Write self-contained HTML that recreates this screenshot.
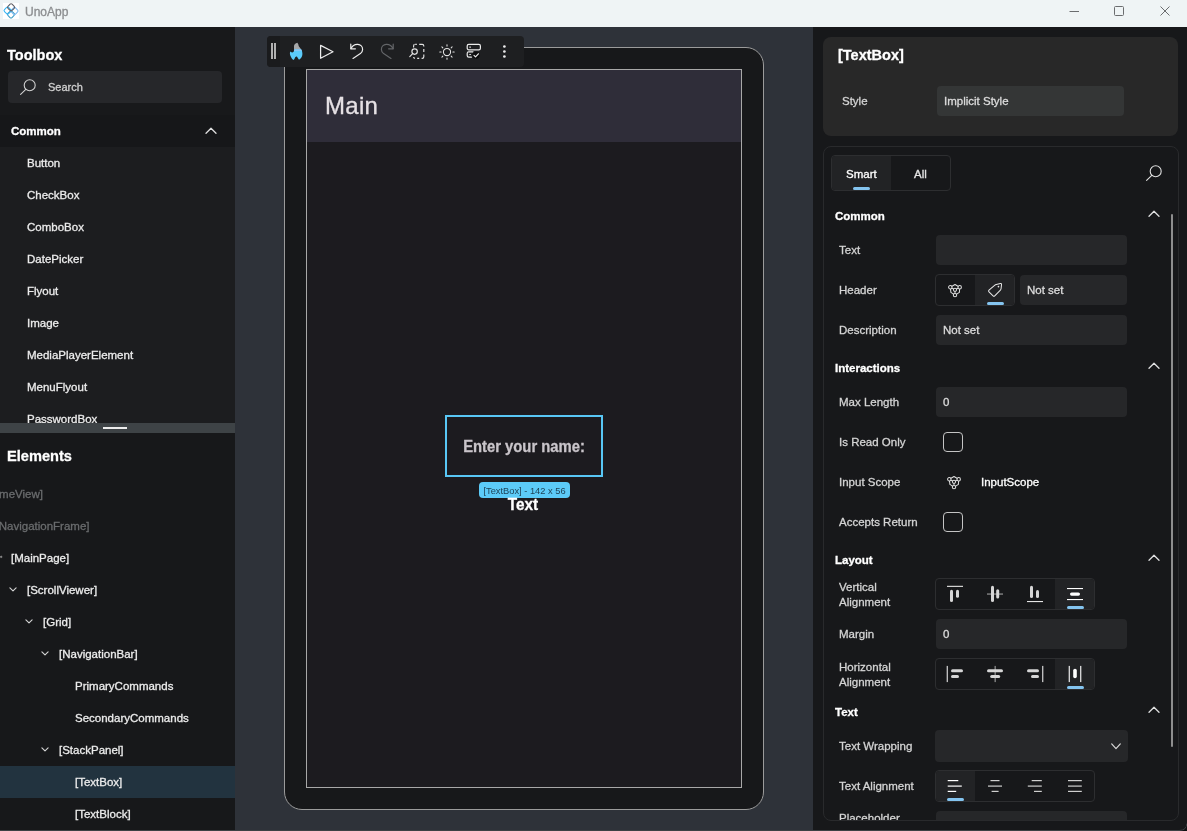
<!DOCTYPE html>
<html lang="en">
<head>
<meta charset="utf-8">
<title>UnoApp</title>
<style>
*{box-sizing:border-box;margin:0;padding:0}
html,body{width:1187px;height:831px;overflow:hidden;background:#17181a}
body{font-family:"Liberation Sans",sans-serif;font-size:12px;color:#ececec;position:relative}
.abs{position:absolute}
#titlebar,#left,#center,#right{will-change:transform}
.t{position:absolute;white-space:nowrap;line-height:16px;height:16px;-webkit-text-stroke:0.3px currentColor}
.b{font-weight:bold}
svg{position:absolute;overflow:visible}
/* title bar */
#titlebar{left:0;top:0;width:1187px;height:27px;background:#eff4f5}
/* left */
#left{left:0;top:27px;width:235px;height:804px;background:#17181a;overflow:hidden}
#center{left:235px;top:27px;width:578px;height:804px;background:#2e3239;overflow:hidden}
#right{left:813px;top:27px;width:374px;height:804px;background:#17181a;overflow:hidden}
.inp{position:absolute;background:#262729;border-radius:4px}
.grp{position:absolute;border:1px solid #2d2e30;border-radius:4px;background:#17181a}
.sel{position:absolute;background:#222325;border-radius:3px}
.ul{position:absolute;height:3px;border-radius:2px;background:#84c4ef}
.lbl{color:#d4d4d4}
</style>
</head>
<body>
<!-- TITLE BAR -->
<div id="titlebar" class="abs">
  <div class="abs" style="left:3px;top:3px;width:16px;height:16px;background:#fff"></div>
  <svg style="left:3px;top:3px" width="16" height="16" viewBox="0 0 16 16" fill="none" stroke-width="1.05">
    <rect x="-2.9" y="-2.9" width="5.8" height="5.8" rx="1.4" transform="translate(8 11.4) rotate(45)" stroke="#3d9cc4"/>
    <rect x="-2.9" y="-2.9" width="5.8" height="5.8" rx="1.4" transform="translate(11.5 8) rotate(45)" stroke="#7cb9f0"/>
    <rect x="-2.9" y="-2.9" width="5.8" height="5.8" rx="1.4" transform="translate(4.6 7.6) rotate(45)" stroke="#35b5f5"/>
    <rect x="-2.9" y="-2.9" width="5.8" height="5.8" rx="1.4" transform="translate(8.1 4.3) rotate(45)" stroke="#5d5d64"/>
  </svg>
  <div class="t" style="left:25px;top:4px;font-size:12px;color:#8b8d8f">UnoApp</div>
  <svg style="left:1069px;top:5px" width="110" height="14" viewBox="0 0 110 14" fill="none" stroke="#6b6d6f" stroke-width="1">
    <path d="M0.5 6.5H10"/>
    <rect x="45.5" y="1.5" width="9" height="9" rx="1"/>
    <path d="M91.5 1.5L100.5 10.5M100.5 1.5L91.5 10.5"/>
  </svg>
</div>

<!-- LEFT PANEL -->
<div id="left" class="abs">
  <div class="abs" style="left:0;top:0;width:235px;height:88px;background:#18191b"></div>
  <div class="abs" style="left:0;top:88px;width:235px;height:32px;background:#161719"></div>
  <div class="abs" style="left:0;top:120px;width:235px;height:276px;background:#1c1d1f"></div>
  <div class="t b" style="left:7px;top:18px;font-size:14.5px;line-height:20px;height:20px;color:#fff">Toolbox</div>
  <div class="inp" style="left:8px;top:44px;width:214px;height:32px;background:#26272a"></div>
  <svg style="left:20px;top:52px" width="16" height="16" viewBox="0 0 16 16" fill="none" stroke="#d0d0d0" stroke-width="1.1" stroke-linecap="round"><circle cx="9.7" cy="6.3" r="5.5"/><path d="M5.8 10.4L0.6 15.4"/></svg>
  <div class="t" style="left:48px;top:52px;font-size:11px;color:#cfcfcf">Search</div>
  <div class="t b" style="left:11px;top:96px;font-size:11.5px;color:#fff">Common</div>
  <svg style="left:205px;top:100px" width="12" height="8" viewBox="0 0 12 8" fill="none" stroke="#e0e0e0" stroke-width="1.3" stroke-linecap="round" stroke-linejoin="round"><path d="M1 6.2L6 1.3L11 6.2"/></svg>
  <div class="t" style="left:27px;top:128px;font-size:11.5px">Button</div>
  <div class="t" style="left:27px;top:160px;font-size:11.5px">CheckBox</div>
  <div class="t" style="left:27px;top:192px;font-size:11.5px">ComboBox</div>
  <div class="t" style="left:27px;top:224px;font-size:11.5px">DatePicker</div>
  <div class="t" style="left:27px;top:256px;font-size:11.5px">Flyout</div>
  <div class="t" style="left:27px;top:288px;font-size:11.5px">Image</div>
  <div class="t" style="left:27px;top:320px;font-size:11.5px">MediaPlayerElement</div>
  <div class="t" style="left:27px;top:352px;font-size:11.5px">MenuFlyout</div>
  <div class="t" style="left:27px;top:384px;font-size:11.5px">PasswordBox</div>
  <div class="abs" style="left:0;top:396px;width:235px;height:10px;background:#3e4346"></div>
  <div class="abs" style="left:103px;top:400px;width:24px;height:2px;background:#ececec"></div>
  <div class="abs" style="left:0;top:406px;width:235px;height:398px;background:#17181a"></div>
  <div class="t b" style="left:7px;top:419px;font-size:14.6px;line-height:20px;height:20px;color:#fff">Elements</div>
  <div class="t" style="right:192px;top:459px;font-size:11.5px;color:#6a6c6e">meView]</div>
  <div class="t" style="right:145.5px;top:491px;font-size:11.5px;color:#6a6c6e">NavigationFrame]</div>
  <div class="abs" style="left:0;top:739px;width:235px;height:32px;background:#22333f"></div>
  <div class="t" style="left:11px;top:523px;font-size:11.5px">[MainPage]</div>
  <div class="abs" style="left:0;top:529px;width:2px;height:1.5px;background:#8a8a8a;transform:rotate(-40deg)"></div>
  <div class="t" style="left:27px;top:555px;font-size:11.5px">[ScrollViewer]</div>
  <svg style="left:9px;top:560px" width="8" height="5" viewBox="0 0 8 5" fill="none" stroke="#d2d2d2" stroke-width="1.15" stroke-linecap="round" stroke-linejoin="round"><path d="M0.9 0.8L4 3.9L7.1 0.8"/></svg>
  <div class="t" style="left:43px;top:587px;font-size:11.5px">[Grid]</div>
  <svg style="left:25px;top:592px" width="8" height="5" viewBox="0 0 8 5" fill="none" stroke="#d2d2d2" stroke-width="1.15" stroke-linecap="round" stroke-linejoin="round"><path d="M0.9 0.8L4 3.9L7.1 0.8"/></svg>
  <div class="t" style="left:59px;top:619px;font-size:11.5px">[NavigationBar]</div>
  <svg style="left:41px;top:624px" width="8" height="5" viewBox="0 0 8 5" fill="none" stroke="#d2d2d2" stroke-width="1.15" stroke-linecap="round" stroke-linejoin="round"><path d="M0.9 0.8L4 3.9L7.1 0.8"/></svg>
  <div class="t" style="left:75px;top:651px;font-size:11.5px">PrimaryCommands</div>
  <div class="t" style="left:75px;top:683px;font-size:11.5px">SecondaryCommands</div>
  <div class="t" style="left:59px;top:715px;font-size:11.5px">[StackPanel]</div>
  <svg style="left:41px;top:720px" width="8" height="5" viewBox="0 0 8 5" fill="none" stroke="#d2d2d2" stroke-width="1.15" stroke-linecap="round" stroke-linejoin="round"><path d="M0.9 0.8L4 3.9L7.1 0.8"/></svg>
  <div class="t" style="left:75px;top:747px;font-size:11.5px">[TextBox]</div>
  <div class="t" style="left:75px;top:779px;font-size:11.5px">[TextBlock]</div>
</div>

<!-- CENTER -->
<div id="center" class="abs">
<div class="abs" style="left:-235px;top:-27px;width:0;height:0">
  <div class="abs" style="left:284px;top:47px;width:480px;height:763px;border:1px solid #9b9b9b;border-radius:18px;background:#17181a"></div>
  <div class="abs" style="left:306px;top:69px;width:436px;height:719px;border:1px solid #a8a8a8;background:#1c1b1f"></div>
  <div class="abs" style="left:307px;top:70px;width:434px;height:72px;background:#2f2d39"></div>
  <div class="t" style="left:325px;top:90.3px;font-size:24px;letter-spacing:0.3px;line-height:32px;height:32px;color:#e6e1e5">Main</div>
  <div class="abs" style="left:445px;top:415px;width:158px;height:62px;border:2px solid #58c7f5"></div>
  <div class="t b" style="left:458px;top:437px;width:132px;text-align:center;font-size:16px;line-height:20px;height:20px;color:#c9c5ca;transform:scaleX(0.925);transform-origin:50% 50%">Enter your name:</div>
  <div class="abs" style="left:479px;top:482px;width:91px;height:16px;border-radius:4px;background:#5ccbf8"></div>
  <div class="t" style="left:479px;top:482.6px;width:91px;text-align:center;font-size:9.3px;line-height:16px;color:#1e4357;-webkit-text-stroke:0">[TextBox] - 142 x 56</div>
  <div class="t b" style="left:503px;top:495.2px;width:40px;text-align:center;font-size:16px;line-height:20px;height:20px;color:#fff;transform:scaleX(0.958)">Text</div>
  <div class="abs" style="left:267px;top:36px;width:257px;height:31px;border-radius:4px;background:#1e1f21"></div>
  <div class="abs" style="left:267px;top:36px;width:13px;height:31px;border-radius:4px 0 0 4px;background:#1a1b1d"></div>
  <div class="abs" style="left:271.2px;top:43px;width:1.7px;height:16px;background:#b0b0b0"></div>
  <div class="abs" style="left:274.3px;top:43px;width:1.8px;height:16px;background:#b0b0b0"></div>
  <svg style="left:289px;top:43px" width="14" height="17" viewBox="0 0 14 17"><path d="M8.4 -0.2C6.5 0.3 5 1.5 5 3L5 6.4L12.2 6.4C11.5 5 10 4 9.7 3C9.5 2 9.2 0.8 8.4 -0.2Z" fill="#a6a7a9"/><path d="M5.3 6.3L12.1 6.3C13 7.5 13.5 9.5 13.4 11.3C13.3 13.5 12 15.8 10 16.7C9.6 16 9 15.4 8.8 15C8.5 14.2 8 13.5 7.4 13.5C6.6 13.5 6.1 14.4 5.9 15C5.6 15.8 5.2 16.4 4.7 16.9C3.4 16.4 2.4 15 2 14C1.4 12.8 0.9 11.5 0.9 10.5C0.9 9.8 1 9 1.3 8.4C2 8.8 2.7 9.4 3.4 9.4C4.2 9.3 4.6 8.9 4.8 8.6C5 8 5.2 7 5.3 6.3Z" fill="#5bcbfa"/><path d="M5.3 6.3H12.1L12.8 8H4.9Z" fill="#8cc6f3"/></svg>
  <svg style="left:319px;top:44px" width="16" height="16" viewBox="0 0 16 16" fill="none" stroke="#ececec" stroke-width="1.25" stroke-linejoin="round"><path d="M1.6 1.4L14 7.7L1.6 14.3Z"/></svg>
  <svg style="left:350px;top:43px" width="14" height="16" viewBox="0 0 14 16" fill="none" stroke="#ececec" stroke-width="1.2" stroke-linecap="round" stroke-linejoin="round"><path d="M0.8 1.2V5.8H5.4"/><path d="M1 5.6C2.4 2.6 5 1.2 7.8 1.4C10.6 1.6 12.6 3.8 12.6 6.4C12.6 8.2 11.8 9.4 10.4 10.6L3 15.4"/></svg>
  <svg style="left:380px;top:43px" width="14" height="16" viewBox="0 0 14 16" fill="none" stroke="#636568" stroke-width="1.2" stroke-linecap="round" stroke-linejoin="round"><path d="M13.2 1.2V5.8H8.6"/><path d="M13 5.6C11.6 2.6 9 1.2 6.2 1.4C3.4 1.6 1.4 3.8 1.4 6.4C1.4 8.2 2.2 9.4 3.6 10.6L11 15.4"/></svg>
  <svg style="left:409px;top:43px" width="16" height="17" viewBox="0 0 16 17" fill="none" stroke="#e4e4e4" stroke-width="1.15" stroke-linecap="butt"><path d="M6.2 1.4H7.8M10.2 1.4H13.2Q14.8 1.4 14.8 3V3.6M14.8 6V9M14.8 11.4V13.8Q14.8 15.4 13.2 15.4H12.6M10.2 15.4H8.2M5.9 15.4Q4.6 15.2 4.6 14M4.6 4.6V3Q4.6 1.6 5.6 1.4"/><circle cx="5.6" cy="8.6" r="2.7" fill="#1e1f21"/><path d="M3.6 10.7L0.8 13.6" stroke-linecap="round"/></svg>
  <svg style="left:446.5px;top:51.5px" width="1" height="1" viewBox="0 0 1 1" fill="none" stroke="#e4e4e4" stroke-width="1.05" stroke-linecap="round"><circle cx="0" cy="0" r="3.6"/><path d="M0 -5.9V-7.2" transform="rotate(0)"/><path d="M0 -5.9V-7.2" transform="rotate(45)"/><path d="M0 -5.9V-7.2" transform="rotate(90)"/><path d="M0 -5.9V-7.2" transform="rotate(135)"/><path d="M0 -5.9V-7.2" transform="rotate(180)"/><path d="M0 -5.9V-7.2" transform="rotate(225)"/><path d="M0 -5.9V-7.2" transform="rotate(270)"/><path d="M0 -5.9V-7.2" transform="rotate(315)"/></svg>
  <svg style="left:466px;top:43px" width="16" height="16" viewBox="0 0 16 16" fill="none" stroke="#ececec" stroke-width="1.2" stroke-linecap="round" stroke-linejoin="round"><rect x="1.2" y="1.4" width="13.2" height="5.4" rx="1.6"/><path d="M3.8 4.1H4.4"/><path d="M7 8.8H2.8Q1.2 8.8 1.2 10.4V12.6Q1.2 14.2 2.8 14.2H5.4"/><path d="M3.8 11.5H4.4"/><circle cx="10" cy="12.2" r="3.6" fill="#0d0d0e" stroke="none"/><path d="M8 12.3L9.5 13.8L12.4 10.8"/></svg>
  <svg style="left:502px;top:44px" width="5" height="15" viewBox="0 0 5 15" fill="#ececec"><circle cx="2.4" cy="2.5" r="1.35"/><circle cx="2.4" cy="7.5" r="1.35"/><circle cx="2.4" cy="12.5" r="1.35"/></svg>
</div>
</div>

<!-- RIGHT -->
<div id="right" class="abs">
<div class="abs" style="left:-813px;top:-27px;width:0;height:0">
  <div class="abs" style="left:823px;top:37px;width:355px;height:99px;border-radius:8px;background:#282828"></div>
  <div class="t b" style="left:838px;top:45px;font-size:14.5px;line-height:20px;height:20px;color:#fff">[TextBox]</div>
  <div class="t lbl" style="left:842px;top:93px;font-size:11.5px">Style</div>
  <div class="inp" style="left:937px;top:86px;width:187px;height:30px;background:#343636"></div>
  <div class="t" style="left:944px;top:93px;font-size:11.5px;color:#dcdcdc">Implicit Style</div>
  <div class="abs" style="left:823px;top:146px;width:356px;height:675px;border:1px solid #292a2c;border-radius:8px;background:#17181a;overflow:hidden">
    <div class="inp" style="left:112px;top:664px;width:191px;height:30px"></div>
    <div class="t lbl" style="left:15px;top:663px;font-size:11.5px">Placeholder</div>
  </div>
  <div class="grp" style="left:831px;top:155px;width:120px;height:36px"></div>
  <div class="sel" style="left:832px;top:156px;width:59px;height:34px;border-radius:3px 0 0 3px"></div>
  <div class="t" style="left:846px;top:166px;font-size:11.5px;color:#fff">Smart</div>
  <div class="t" style="left:914px;top:166px;font-size:11.5px;color:#e4e4e4">All</div>
  <div class="ul" style="left:853px;top:187px;width:17px"></div>
  <svg style="left:1146px;top:165px" width="16" height="16" viewBox="0 0 16 16" fill="none" stroke="#e0e0e0" stroke-width="1.1" stroke-linecap="round"><circle cx="9.7" cy="6.3" r="5.5"/><path d="M5.8 10.4L0.6 15.4"/></svg>
  <div class="abs" style="left:1171px;top:214px;width:2px;height:533px;border-radius:1px;background:#8e8e8e"></div>
  <div class="t b" style="left:835px;top:208px;font-size:11.5px;color:#fff">Common</div>
  <svg style="left:1148px;top:210px" width="12" height="8" viewBox="0 0 12 8" fill="none" stroke="#e0e0e0" stroke-width="1.3" stroke-linecap="round" stroke-linejoin="round"><path d="M1 6.2L6 1.3L11 6.2"/></svg>
  <div class="t lbl" style="left:839px;top:242px;font-size:11.5px">Text</div>
  <div class="inp" style="left:936px;top:235px;width:191px;height:30px"></div>
  <div class="t lbl" style="left:839px;top:282px;font-size:11.5px">Header</div>
  <div class="grp" style="left:935px;top:274px;width:80px;height:32px"></div>
  <div class="sel" style="left:975px;top:275px;width:39px;height:30px;border-radius:0 3px 3px 0"></div>
  <svg style="left:948px;top:283.5px" width="14" height="14" viewBox="0 0 14 14"><g fill="none" stroke="#dedede" stroke-width="1.05" stroke-linejoin="round"><path d="M2.3 3.2L7 0.5L11.7 3.2L11.4 8.4L7 11.1L2.9 8.4Z"/><path d="M2.3 3.2L7 5.8L11.7 3.2M7 5.8V11.1"/><circle cx="2.3" cy="3.2" r="1.7" fill="#17181a"/><circle cx="11.7" cy="3.2" r="1.7" fill="#17181a"/><circle cx="7" cy="5.8" r="1.6" fill="#17181a"/><circle cx="7" cy="11.1" r="1.7" fill="#17181a"/></g></svg>
  <svg style="left:987px;top:282px" width="16" height="16" viewBox="0 0 16 16" fill="none" stroke="#e8e8e8" stroke-width="1.1" stroke-linejoin="round"><g transform="translate(8.1 8.1) scale(0.93) translate(-8 -8)"><path d="M9.2 1.9L13.6 0.9Q15 0.7 14.9 2.1L14.4 6.6Q14.3 7.4 13.7 8L7.6 14.2Q6.7 15.1 5.8 14.2L1.4 9.8Q0.5 8.9 1.4 8L7.8 2.6Q8.4 2.1 9.2 1.9Z"/><circle cx="11.6" cy="4.2" r="0.9" fill="#e8e8e8" stroke="none"/></g></svg>
  <div class="ul" style="left:987px;top:302px;width:17px"></div>
  <div class="inp" style="left:1020px;top:275px;width:107px;height:30px"></div>
  <div class="t" style="left:1027px;top:282px;font-size:11.5px;color:#dcdcdc">Not set</div>
  <div class="t lbl" style="left:839px;top:322px;font-size:11.5px">Description</div>
  <div class="inp" style="left:936px;top:315px;width:191px;height:30px"></div>
  <div class="t" style="left:943px;top:322px;font-size:11.5px;color:#dcdcdc">Not set</div>
  <div class="t b" style="left:835px;top:360px;font-size:11.5px;color:#fff">Interactions</div>
  <svg style="left:1148px;top:362px" width="12" height="8" viewBox="0 0 12 8" fill="none" stroke="#e0e0e0" stroke-width="1.3" stroke-linecap="round" stroke-linejoin="round"><path d="M1 6.2L6 1.3L11 6.2"/></svg>
  <div class="t lbl" style="left:839px;top:394px;font-size:11.5px">Max Length</div>
  <div class="inp" style="left:936px;top:387px;width:191px;height:30px"></div>
  <div class="t" style="left:943px;top:394px;font-size:11.5px;color:#dcdcdc">0</div>
  <div class="t lbl" style="left:839px;top:434px;font-size:11.5px">Is Read Only</div>
  <div class="abs" style="left:943px;top:432px;width:20px;height:20px;border:1px solid #c4c4c4;border-radius:4px"></div>
  <div class="t lbl" style="left:839px;top:474px;font-size:11.5px">Input Scope</div>
  <svg style="left:947px;top:475.5px" width="14" height="14" viewBox="0 0 14 14"><g fill="none" stroke="#dedede" stroke-width="1.05" stroke-linejoin="round"><path d="M2.3 3.2L7 0.5L11.7 3.2L11.4 8.4L7 11.1L2.9 8.4Z"/><path d="M2.3 3.2L7 5.8L11.7 3.2M7 5.8V11.1"/><circle cx="2.3" cy="3.2" r="1.7" fill="#17181a"/><circle cx="11.7" cy="3.2" r="1.7" fill="#17181a"/><circle cx="7" cy="5.8" r="1.6" fill="#17181a"/><circle cx="7" cy="11.1" r="1.7" fill="#17181a"/></g></svg>
  <div class="t" style="left:981px;top:474px;font-size:11.5px;color:#fff">InputScope</div>
  <div class="t lbl" style="left:839px;top:514px;font-size:11.5px">Accepts Return</div>
  <div class="abs" style="left:943px;top:512px;width:20px;height:20px;border:1px solid #c4c4c4;border-radius:4px"></div>
  <div class="t b" style="left:835px;top:552px;font-size:11.5px;color:#fff">Layout</div>
  <svg style="left:1148px;top:554px" width="12" height="8" viewBox="0 0 12 8" fill="none" stroke="#e0e0e0" stroke-width="1.3" stroke-linecap="round" stroke-linejoin="round"><path d="M1 6.2L6 1.3L11 6.2"/></svg>
  <div class="t lbl" style="left:839px;top:580px;font-size:11.5px;line-height:15px;height:30px;white-space:normal;width:70px">Vertical Alignment</div>
  <div class="grp" style="left:935px;top:578px;width:160px;height:32px"></div>
  <div class="sel" style="left:1055px;top:579px;width:39px;height:30px;border-radius:0 3px 3px 0"></div>
  <svg style="left:935px;top:578px" width="160" height="32" viewBox="935 578 160 32" fill="#d6d6d6"><rect x="947" y="585.8" width="16" height="1.1" fill="#e6e6e6"/><rect x="950" y="589.8" width="3" height="12.2" rx="1.5"/><rect x="956" y="589.8" width="3" height="8" rx="1.5"/><rect x="987" y="593.5" width="16" height="1.1" fill="#a0a0a0"/><rect x="991" y="585.8" width="3" height="16.2" rx="1.5"/><rect x="996.2" y="589.2" width="3" height="9.4" rx="1.5"/><rect x="1030" y="585.8" width="3" height="12.2" rx="1.5"/><rect x="1036" y="590" width="3" height="8" rx="1.5"/><rect x="1027" y="601" width="16" height="1.1" fill="#e6e6e6"/><rect x="1067" y="588" width="16" height="1.1" fill="#fff"/><rect x="1070" y="592.4" width="10" height="3.3" rx="1.6" fill="#fff"/><rect x="1067" y="599" width="16" height="1.1" fill="#fff"/></svg>
  <div class="ul" style="left:1067px;top:606px;width:17px"></div>
  <div class="t lbl" style="left:839px;top:626px;font-size:11.5px">Margin</div>
  <div class="inp" style="left:936px;top:619px;width:191px;height:30px"></div>
  <div class="t" style="left:943px;top:626px;font-size:11.5px;color:#dcdcdc">0</div>
  <div class="t lbl" style="left:839px;top:660px;font-size:11.5px;line-height:15px;height:30px;white-space:normal;width:70px">Horizontal Alignment</div>
  <div class="grp" style="left:935px;top:658px;width:160px;height:32px"></div>
  <div class="sel" style="left:1055px;top:659px;width:39px;height:30px;border-radius:0 3px 3px 0"></div>
  <svg style="left:935px;top:658px" width="160" height="32" viewBox="935 658 160 32" fill="#d6d6d6"><rect x="946.7" y="665.9" width="1.1" height="16.2" fill="#e6e6e6"/><rect x="951" y="669.2" width="12" height="3" rx="1.5"/><rect x="951" y="675" width="8" height="3" rx="1.5"/><rect x="994.6" y="665.9" width="1.1" height="16.2" fill="#a0a0a0"/><rect x="987" y="669.2" width="16" height="3" rx="1.5"/><rect x="990.2" y="675" width="10" height="3" rx="1.5"/><rect x="1027" y="669.2" width="12" height="3" rx="1.5"/><rect x="1031" y="675" width="8" height="3" rx="1.5"/><rect x="1042.2" y="665.9" width="1.1" height="16.2" fill="#e6e6e6"/><rect x="1068.7" y="665.9" width="1.1" height="16.2" fill="#fff"/><rect x="1073.2" y="668.8" width="3.6" height="9.5" rx="1.8" fill="#fff"/><rect x="1080.2" y="665.9" width="1.1" height="16.2" fill="#fff"/></svg>
  <div class="ul" style="left:1067px;top:686px;width:17px"></div>
  <div class="t b" style="left:835px;top:704px;font-size:11.5px;color:#fff">Text</div>
  <svg style="left:1148px;top:706px" width="12" height="8" viewBox="0 0 12 8" fill="none" stroke="#e0e0e0" stroke-width="1.3" stroke-linecap="round" stroke-linejoin="round"><path d="M1 6.2L6 1.3L11 6.2"/></svg>
  <div class="t lbl" style="left:839px;top:738px;font-size:11.5px">Text Wrapping</div>
  <div class="inp" style="left:935px;top:730px;width:193px;height:32px"></div>
  <svg style="left:1111px;top:743px" width="10" height="7" viewBox="0 0 10 7" fill="none" stroke="#d8d8d8" stroke-width="1.2" stroke-linecap="round" stroke-linejoin="round"><path d="M0.7 0.9L5 5.6L9.3 0.9"/></svg>
  <div class="t lbl" style="left:839px;top:778px;font-size:11.5px">Text Alignment</div>
  <div class="grp" style="left:935px;top:770px;width:160px;height:32px"></div>
  <div class="sel" style="left:936px;top:771px;width:39px;height:30px;border-radius:3px 0 0 3px"></div>
  <svg style="left:935px;top:770px" width="160" height="32" viewBox="935 770 160 32" fill="#cfcfcf"><rect x="947.7" y="780" width="10.6" height="1.2" fill="#fff"/><rect x="947.7" y="785.5" width="14.1" height="1.2" fill="#fff"/><rect x="947.7" y="790.8" width="8.5" height="1.2" fill="#fff"/><rect x="990.5" y="780" width="9" height="1.2"/><rect x="988" y="785.5" width="14" height="1.2"/><rect x="991.6" y="790.8" width="7" height="1.2"/><rect x="1031.7" y="780" width="10.1" height="1.2"/><rect x="1027.8" y="785.5" width="14" height="1.2"/><rect x="1034" y="790.8" width="7.8" height="1.2"/><rect x="1068" y="780" width="13.8" height="1.2"/><rect x="1068" y="785.5" width="13.8" height="1.2"/><rect x="1068" y="790.8" width="13.8" height="1.2"/></svg>
  <div class="ul" style="left:947px;top:798px;width:17px"></div>
</div>
</div>

<div class="abs" style="left:0;top:830px;width:1180px;height:1px;background:#3d4144"></div>
<svg style="left:1179px;top:822px" width="8" height="9" viewBox="0 0 8 9" fill="none"><path d="M0 8.5Q7.5 8.5 8 1.5" stroke="#3d4144" stroke-width="1"/><path d="M8 9V3Q7 9 2 9Z" fill="#101112"/></svg>
</body>
</html>
